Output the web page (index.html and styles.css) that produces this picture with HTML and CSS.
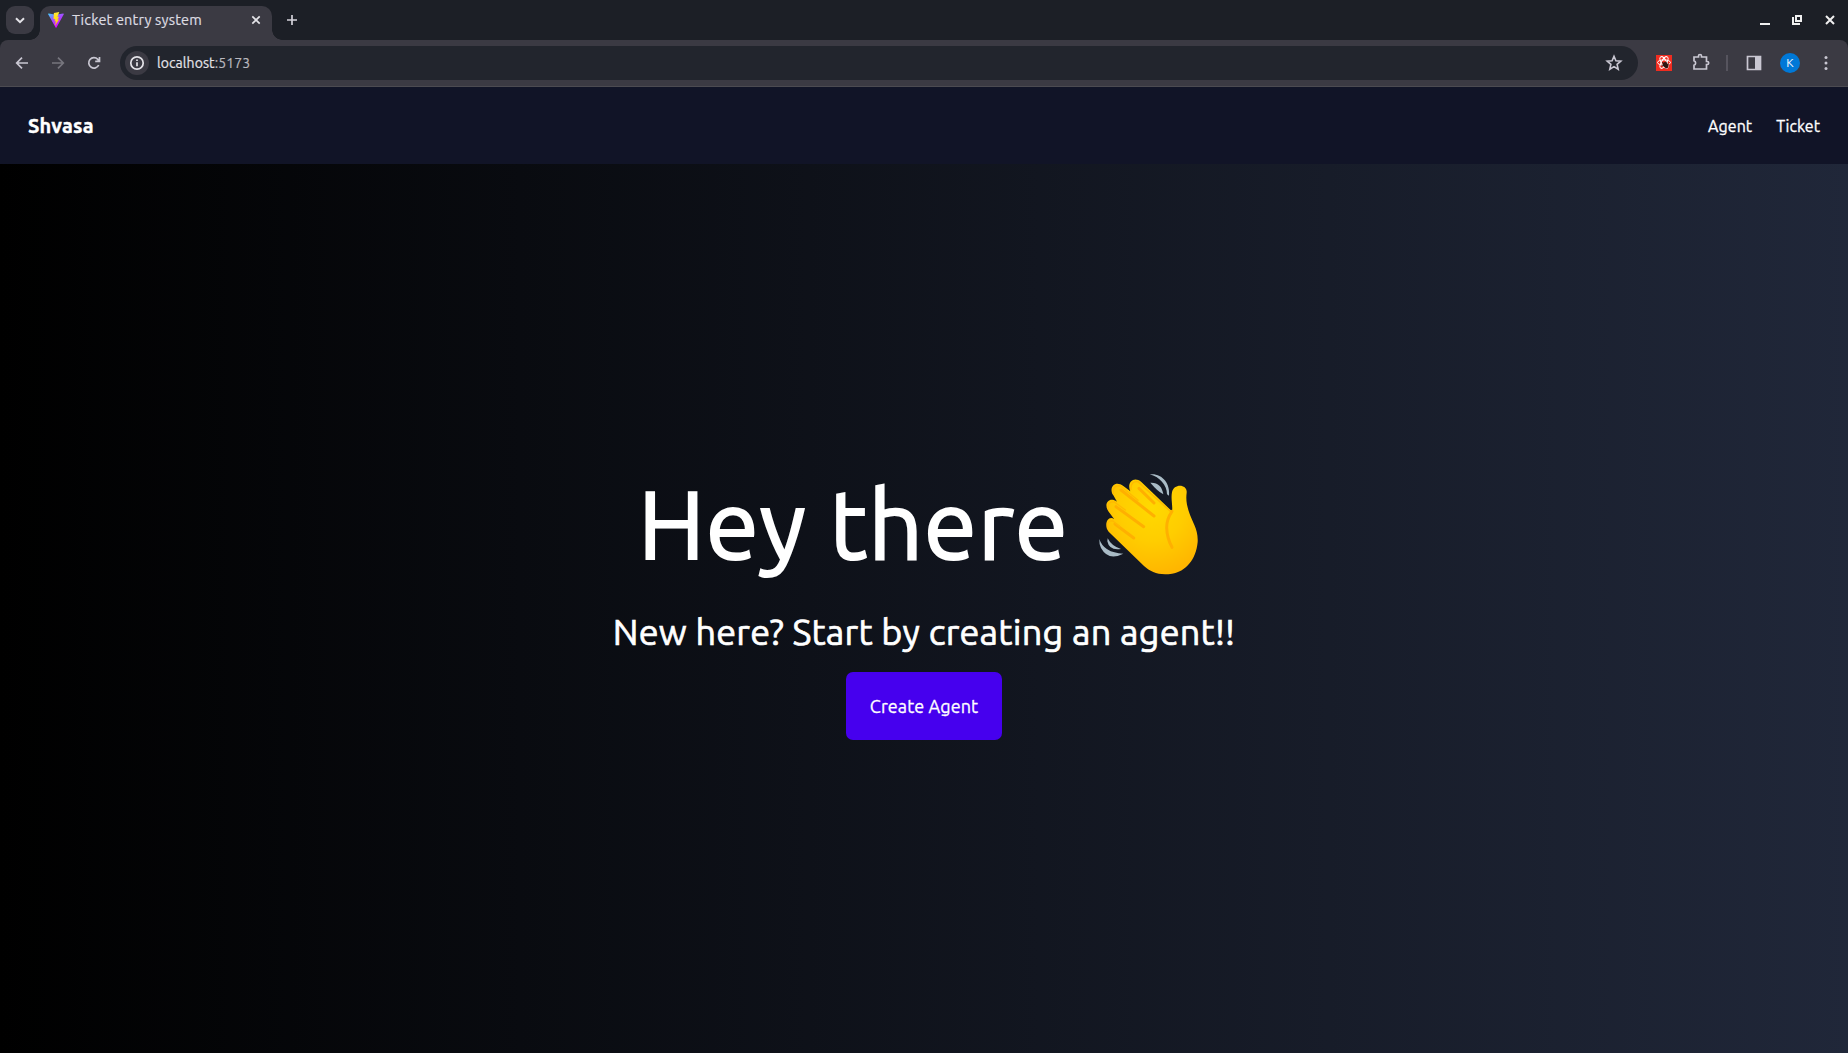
FILE: index.html
```html
<!DOCTYPE html>
<html lang="en">
<head>
<meta charset="utf-8">
<title>Ticket entry system</title>
<link rel="stylesheet" href="styles.css">
</head>
<body>
<div class="tabs">
  <div class="tab-search"><svg width="28" height="28" viewBox="0 0 28 28"><path d="M10 12.2l4 4 4-4"/></svg></div>
  <div class="tab">
    <svg class="vite" width="16" height="16" viewBox="0 0 32 32">
      <defs>
        <linearGradient id="shield" x1="0" y1="0" x2=".6" y2="1"><stop offset="0" stop-color="#41d1ff"/><stop offset=".45" stop-color="#a050ff"/><stop offset="1" stop-color="#e000ff"/></linearGradient>
        <linearGradient id="bolt" x1="0" y1="0" x2="0" y2="1"><stop offset="0" stop-color="#ffea33"/><stop offset="1" stop-color="#ffc800"/></linearGradient>
      </defs>
      <path fill="url(#shield)" d="M31.6 4.7 17 30.9a1 1 0 0 1-1.8 0L.3 4.7a1.2 1.2 0 0 1 1.3-1.6L16 5.6l14.4-2.5a1.2 1.2 0 0 1 1.2 1.6Z"/>
      <path fill="url(#bolt)" d="M22.5.1 11.8 2.2l-.8 12.3 3.4-.7-1.2 5.3 2.6-.7-2 9.6L22 15l-3 .6 3-6.2-3.2.5Z"/>
    </svg>
    <span class="tab-title">Ticket entry system</span>
    <svg class="tab-close" width="12" height="12" viewBox="0 0 12 12"><path d="M2.3 2.3l7.4 7.4M9.7 2.3l-7.4 7.4"/></svg>
  </div>
  <svg class="plus" width="16" height="16" viewBox="0 0 16 16"><path d="M8 3v10M3 8h10"/></svg>
  <div class="window-buttons">
    <svg width="12" height="12" viewBox="0 0 12 12"><path d="M2 10h10"/></svg>
    <svg width="12" height="12" viewBox="0 0 12 12"><path d="M5 2h5v5H5zM2 3v7h7"/></svg>
    <svg width="12" height="12" viewBox="0 0 12 12"><path d="M2 2l8 8M10 2l-8 8"/></svg>
  </div>
</div>
<div class="toolbar">
  <div class="history">
    <svg width="16" height="16" viewBox="0 0 16 16"><path d="M14 8H3M8 2.7L2.7 8 8 13.3"/></svg>
    <svg class="off" width="16" height="16" viewBox="0 0 16 16"><path d="M2 8h11M8 2.7L13.3 8 8 13.3"/></svg>
    <svg width="16" height="16" viewBox="0 0 16 16"><path d="M12.7 10A5.2 5.2 0 1 1 11.8 4.4L13.3 6M13.5 2v4.3H9.2"/></svg>
  </div>
  <div class="address">
    <div class="info"><svg width="16" height="16" viewBox="0 0 16 16"><circle cx="8" cy="8" r="6.2"/><path d="M8 7.2v4M8 4.5v1.6"/></svg></div>
    <span class="url">localhost<span class="port">:5173</span></span>
    <svg class="star" width="18" height="18" viewBox="0 0 18 18"><path d="M9 2.3l1.9 4.5 4.9.4-3.7 3.2 1.1 4.8L9 12.6l-4.2 2.6 1.1-4.8-3.7-3.2 4.9-.4Z"/></svg>
  </div>
  <div class="actions">
    <svg class="react" width="16" height="16" viewBox="0 0 16 16"><path fill="#f02c20" d="M0 0h16v16H0z"/><g fill="none" stroke="#fff" stroke-width="1"><ellipse cx="8" cy="7.5" rx="6.5" ry="2.6"/><ellipse cx="8" cy="7.5" rx="6.5" ry="2.6" transform="rotate(60 8 7.5)"/><ellipse cx="8" cy="7.5" rx="6.5" ry="2.6" transform="rotate(120 8 7.5)"/></g><ellipse cx="9.5" cy="10" rx="2.5" ry="3.2" fill="#301512" transform="rotate(-40 9.5 10)"/><path d="M6 7l6 6M5.5 11l3-1M10 6.5l.5 3M13 9l-2 1M10 14v-3" stroke="#301512" stroke-width=".8"/></svg>
    <svg class="puzzle" width="18" height="18" viewBox="0 0 18 18"><path d="M2 4H6.5V3a1.5 1.5 0 0 1 3 0v1H14.5v4.5h.7a1.5 1.5 0 0 1 0 3h-.7V16H2v-3.8a2.3 2.3 0 0 0 0-4.4Z"/></svg>
    <span class="divider"></span>
    <svg class="panel" width="16" height="16" viewBox="0 0 16 16"><path d="M1.5 1.5h13v13h-13z"/><path class="solid" d="M9 1h6v14H9z"/></svg>
    <span class="avatar">K</span>
    <svg class="dots" width="4" height="16" viewBox="0 0 4 16"><circle cx="2" cy="2.5" r="1.5"/><circle cx="2" cy="8" r="1.5"/><circle cx="2" cy="13.5" r="1.5"/></svg>
  </div>
</div>
<nav class="navbar">
  <a class="brand">Shvasa</a>
  <div class="links"><a class="agent">Agent</a><a class="ticket">Ticket</a></div>
</nav>
<main class="hero">
  <h1><span class="hey">Hey there</span>
    <svg class="wave" width="100" height="105" viewBox="0 0 300 315">
      <defs><radialGradient id="skin" cx=".5" cy=".3" r=".7"><stop offset="0" stop-color="#ffd900"/><stop offset=".5" stop-color="#ffcd00"/><stop offset="1" stop-color="#ffb600"/></radialGradient></defs>
      <path fill="url(#skin)" d="M138 285 32 182C15 160 31 131 49 145L32 122C14 97 35 75 57 92L46 73C30 49 52 26 76 45L97 61C85 36 107 14 130 33L222 121C225 104 218 86 222 64C227 36 269 39 266 65C263 88 267 103 272 120C283 155 301 173 299 213C294 267 262 302 222 308C184 314 159 304 138 285Z"/>
      <g class="fingers"><path d="M51 159l56 42M54 107l83 60M69 57l99 78M123 52l45 44"/></g>
      <g class="edges"><path d="M30 172Q25 146 45 150L66 167M32 117Q26 90 49 93L82 117M46 68Q44 40 68 45L120 88M99 55Q97 30 120 32L220 124"/></g>
      <path class="palm" d="M222 121Q206 144 206 170Q207 202 222 229"/>
      <g class="motion"><path d="M155 10C190 5 218 36 213 74L207 70C207 42 184 17 155 10Z"/><path d="M157 35Q190 33 196 70Q178 60 157 35Z"/><path d="M4 204Q17 245 76 248Q31 271 9 231Q3 218 4 204Z"/><path d="M29 202Q40 225 69 234Q34 240 28 211Z"/></g>
    </svg>
  </h1>
  <p>New here? Start by creating an agent!!</p>
  <a class="create">Create Agent</a>
</main>
</body>
</html>
```
FILE: styles.css
```css
* { box-sizing: border-box; }
body { margin: 0; height: 1053px; display: flex; flex-direction: column; overflow: hidden; background: #1c1f26; color: #fff; font-family: Ubuntu, "Noto Sans", sans-serif; }
svg { display: block; flex: none; fill: none; stroke: #c9c7d2; stroke-width: 1.7; }
.tabs { height: 40px; display: flex; align-items: flex-start; flex: none; background: #1c1f26; }
.tab-search { width: 28px; height: 28px; margin: 6px 6px 0; border-radius: 9px; background: #3b3a43; }
.tab-search svg { stroke: #e4e3e8; stroke-width: 2; }
.tab { position: relative; width: 232px; height: 34px; margin-top: 6px; padding: 0 10px 0 8px; display: flex; align-items: center; border-radius: 10px 10px 0 0; background: #3b3a43; }
.tab::before, .tab::after { content: ""; position: absolute; bottom: 0; width: 10px; height: 10px; }
.tab::before { left: -10px; background: radial-gradient(circle at 0 0, transparent 9.5px, #3b3a43 10px); }
.tab::after { right: -10px; background: radial-gradient(circle at 100% 0, transparent 9.5px, #3b3a43 10px); }
.vite { stroke: none; margin-bottom: 6px; }
.tab-title { margin-left: 8px; padding-bottom: 6px; font-size: 14.5px; letter-spacing: .17px; line-height: 20px; white-space: nowrap; color: #dddce2; -webkit-text-stroke: .2px; }
.tab-close { margin: 0 0 6px auto; stroke: #e4e3e8; }
.plus { margin: 12px 0 0 12px; stroke: #d3d2da; }
.window-buttons { display: flex; gap: 21px; margin: 14px 12px 0 auto; }
.window-buttons svg { stroke: #f0f0f0; stroke-width: 2; }
.toolbar { height: 47px; flex: none; display: flex; align-items: flex-start; background: #3b3a43; border-bottom: 1px solid #4c4b51; border-radius: 8px 8px 0 0; }
.history { display: flex; gap: 20px; margin: 15px 0 0 14px; }
.off { stroke: #77767e; }
.address { width: 1518px; height: 34px; margin: 6px 0 0 18px; display: flex; align-items: center; border-radius: 17px; background: #22252d; }
.info { width: 24px; height: 24px; margin-left: 5px; display: grid; place-items: center; border-radius: 50%; background: #3b3a43; }
.info svg { stroke: #e4e3e8; }
.url { margin-left: 8px; font-size: 14px; letter-spacing: .08px; line-height: 20px; color: #e4e3e8; -webkit-text-stroke: .2px; }
.port { color: #b9b8be; }
.star { margin: 0 15px 0 auto; stroke-width: 1.6; }
.actions { display: flex; align-items: center; height: 46px; }
.react { margin-left: 18px; stroke: none; }
.puzzle { margin-left: 20px; margin-bottom: 2px; }
.divider { width: 2px; height: 16px; margin-left: 16px; background: #56545e; }
.panel { margin-left: 18px; }
.solid { fill: #c9c7d2; stroke: none; }
.avatar { width: 20px; height: 20px; margin-left: 18px; border-radius: 50%; background: #0078d7; font-size: 12px; line-height: 20px; text-align: center; }
.dots { margin-left: 24px; fill: #c9c7d2; stroke: none; }
.navbar { height: 77px; flex: none; display: flex; justify-content: space-between; align-items: center; padding: 0 28px; background: #111427; }
.brand { font-size: 20px; font-weight: 700; letter-spacing: .2px; line-height: 28px; -webkit-text-stroke: .4px; }
.links { display: flex; gap: 24px; font-size: 16px; letter-spacing: .05px; line-height: 24px; -webkit-text-stroke: .3px; }
.hero { flex: 1; display: flex; flex-direction: column; align-items: center; background: linear-gradient(to right, #000, #202739); }
h1 { width: 576px; height: 105px; margin: 307px 0 0; display: flex; font-weight: 400; }
.hey { margin-left: 2px; font-size: 96px; letter-spacing: .85px; line-height: 106px; white-space: nowrap; -webkit-text-stroke: 2px; }
.wave { margin: 0 14px 0 auto; stroke: none; }
.fingers, .palm { stroke: #ffb000; stroke-width: 9; stroke-linecap: round; }
.edges { stroke: #ffb900; stroke-width: 4; stroke-linecap: round; }
.motion { fill: #a9bbc6; }
p { margin: 31px 0 0; font-size: 36px; letter-spacing: .24px; line-height: 50px; white-space: nowrap; -webkit-text-stroke: .7px; }
.create { width: 156px; height: 68px; margin-top: 15px; border-radius: 7px; background: #4600ee; font-size: 18px; line-height: 69px; text-align: center; letter-spacing: .08px; -webkit-text-stroke: .3px; }
```
